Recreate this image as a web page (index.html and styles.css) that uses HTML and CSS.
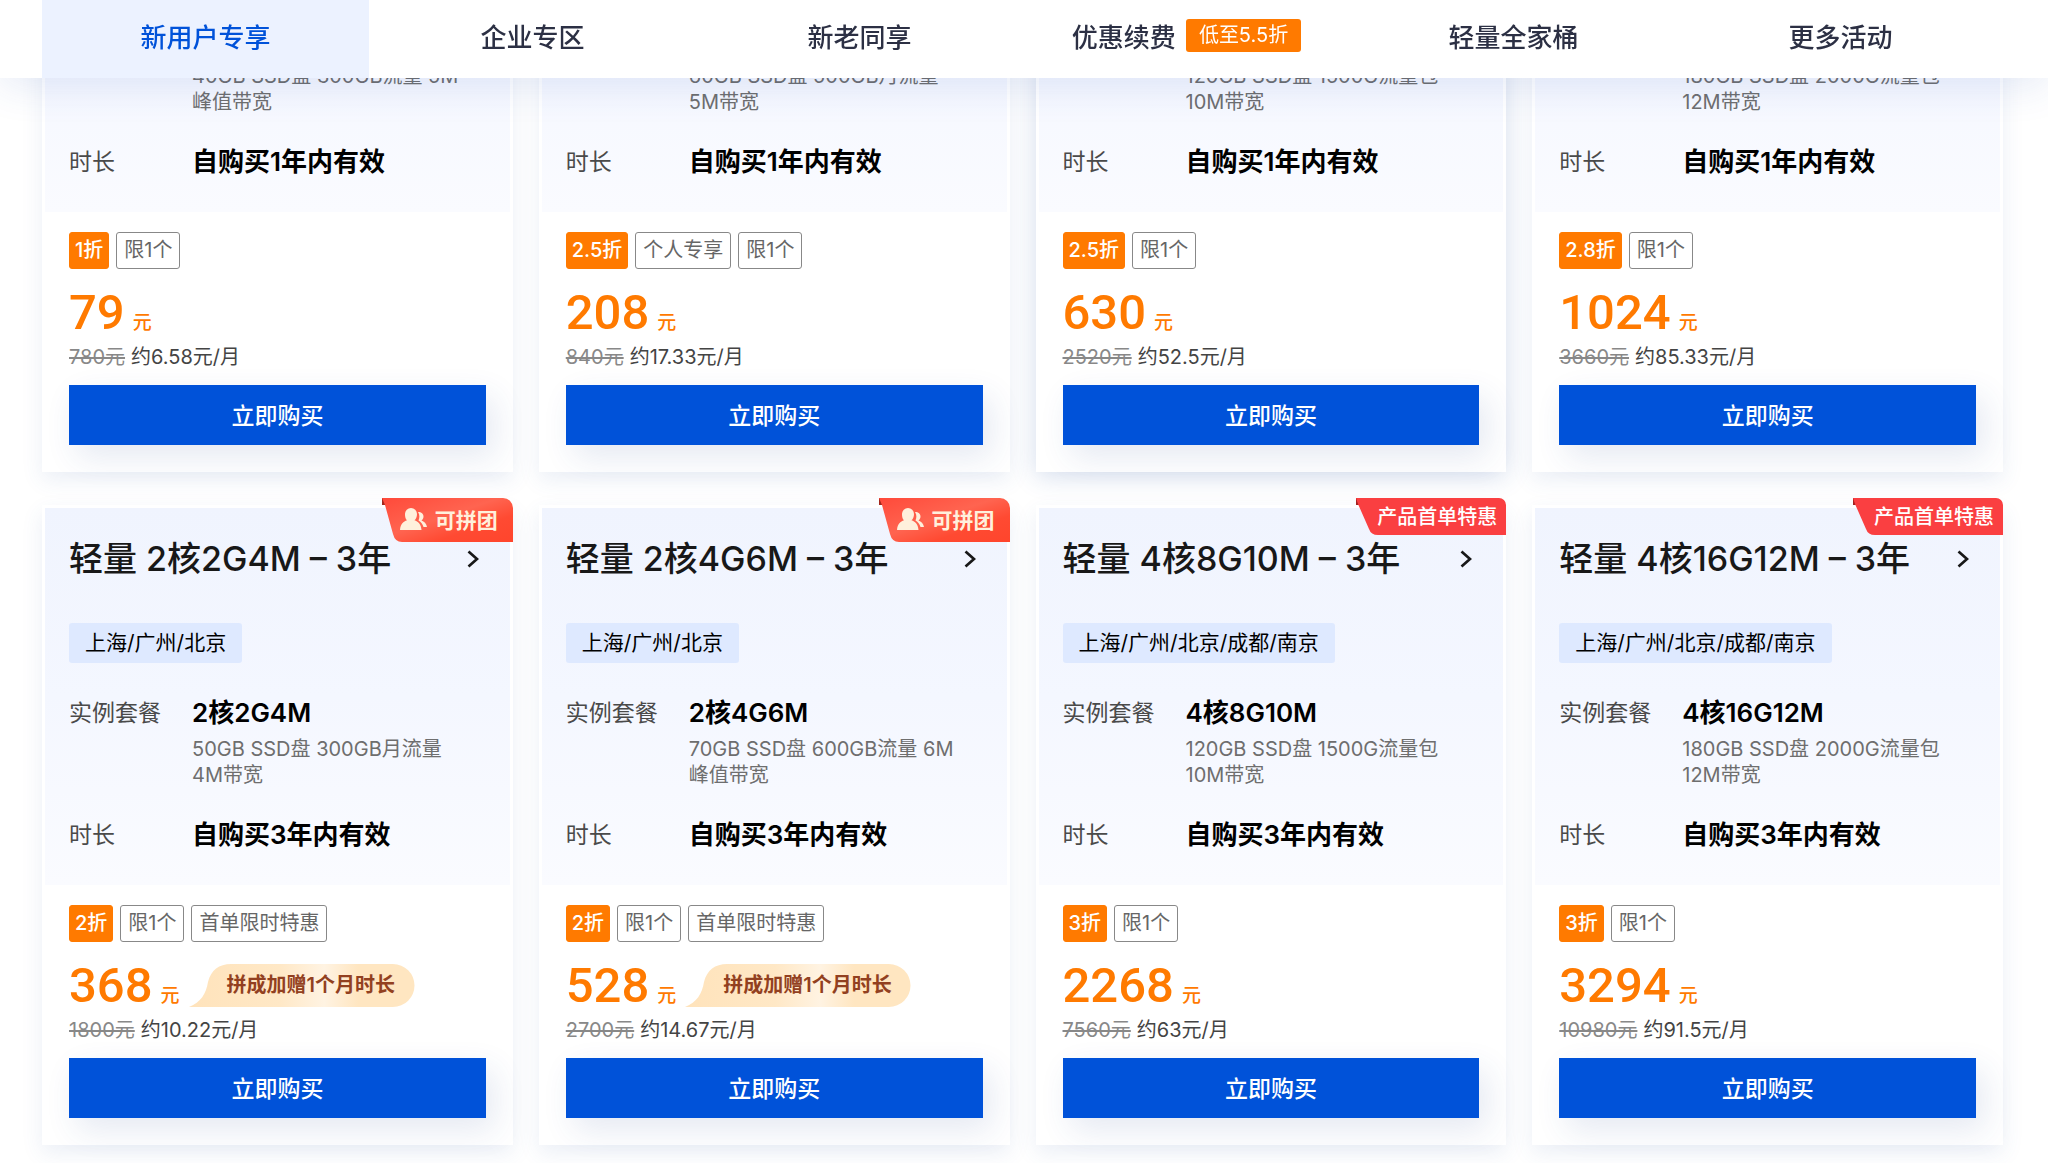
FILE: index.html
```
<!DOCTYPE html>
<html lang="zh-CN">
<head>
<meta charset="UTF-8">
<meta name="viewport" content="width=device-width, initial-scale=1.0">
<title>轻量应用服务器特惠</title>
<link rel="stylesheet" href="styles.css">
</head>
<body>

<!-- 图标 -->
<svg class="sprite" aria-hidden="true">
  <defs>
    <linearGradient id="group-fill" x1="0" y1="0" x2="1" y2="1">
      <stop offset="0" stop-color="#ff4a3a"/>
      <stop offset="0.45" stop-color="#ff6450"/>
      <stop offset="0.7" stop-color="#ff4a32"/>
      <stop offset="1" stop-color="#ff452c"/>
    </linearGradient>
    <linearGradient id="gift-fill">
      <stop offset="0" stop-color="#ffe3bb"/>
      <stop offset="0.4" stop-color="#ffe8c6"/>
      <stop offset="0.6" stop-color="#fff3e2"/>
      <stop offset="0.75" stop-color="#ffe6c1"/>
      <stop offset="1" stop-color="#ffe6c1"/>
    </linearGradient>
  </defs>
  <symbol id="group-bg" viewBox="0 0 131 44">
    <path d="M0 0h3v7H0z" fill="#a3271b"/>
    <path d="M0 0h121a10 10 0 0 1 10 10v34H20q-7 0-9-8L3 7z" fill="url(#group-fill)"/>
  </symbol>
  <symbol id="first-bg" viewBox="0 0 150 37">
    <path d="M0 0h3v7H0z" fill="#a3201f"/>
    <path d="M0 0h143a7 7 0 0 1 7 7v30H22q-7 0-9-6L2 6z" fill="#fa3f41"/>
  </symbol>
  <symbol id="people" viewBox="0 0 28 22">
    <path d="M11 0a6 6 0 0 1 6 6c0 3-1 5-2.500 6.300 3.500 1.200 6.500 3.700 7 9.700H0c.5-6 3.500-8.500 7-9.700C5.500 11 5 9 5 6a6 6 0 0 1 6-6z"/>
    <path d="M18 4c3.500 0 5.500 2 5.500 4.500 0 1.800-.8 3-2 4 2.500 1 5 3 5.500 6.500h-3.500c-.8-3-2.500-5-5-6.500C19.500 10 20 7 18 4z"/>
  </symbol>
  <symbol id="arrow" viewBox="0 0 12 18">
    <path d="M1.500 1.500 10 9l-8.500 7.500" fill="none" stroke="#181818" stroke-width="2.700"/>
  </symbol>
  <symbol id="gift-bg" viewBox="0 0 226 43">
    <path d="M0 43C12 38 17 30 19 18 22 6 30 0 42 0h162a21.500 21.500 0 0 1 0 43z" fill="url(#gift-fill)"/>
  </symbol>
</svg>

<!-- 顶部导航 -->
<nav class="tabs">
  <a class="tab active" href="#new">新用户专享</a>
  <a class="tab" href="#company">企业专区</a>
  <a class="tab" href="#all">新老同享</a>
  <a class="tab" href="#renew">优惠续费<span class="tab-tag">低至5.5折</span></a>
  <a class="tab" href="#family">轻量全家桶</a>
  <a class="tab" href="#more">更多活动</a>
</nav>

<main class="cards" id="new">

  <!-- 1年套餐 -->
  <article class="card under-tabs">
    <dl class="spec">
      <dd class="desc">40GB SSD盘 300GB流量 5M<br>峰值带宽</dd>
      <dt>时长</dt>
      <dd class="value">自购买1年内有效</dd>
    </dl>
    <div class="buy">
      <div class="tags"><span class="tag off">1折</span><span class="tag">限1个</span></div>
      <div class="price"><strong>79</strong><span class="unit">元</span></div>
      <p class="month"><del>780元</del>约6.58元/月</p>
      <button class="buy-btn" type="button">立即购买</button>
    </div>
  </article>

  <article class="card under-tabs">
    <dl class="spec">
      <dd class="desc">60GB SSD盘 500GB月流量<br>5M带宽</dd>
      <dt>时长</dt>
      <dd class="value">自购买1年内有效</dd>
    </dl>
    <div class="buy">
      <div class="tags"><span class="tag off">2.5折</span><span class="tag">个人专享</span><span class="tag">限1个</span></div>
      <div class="price"><strong>208</strong><span class="unit">元</span></div>
      <p class="month"><del>840元</del>约17.33元/月</p>
      <button class="buy-btn" type="button">立即购买</button>
    </div>
  </article>

  <article class="card under-tabs raised">
    <dl class="spec">
      <dd class="desc">120GB SSD盘 1500G流量包<br>10M带宽</dd>
      <dt>时长</dt>
      <dd class="value">自购买1年内有效</dd>
    </dl>
    <div class="buy">
      <div class="tags"><span class="tag off">2.5折</span><span class="tag">限1个</span></div>
      <div class="price"><strong>630</strong><span class="unit">元</span></div>
      <p class="month"><del>2520元</del>约52.5元/月</p>
      <button class="buy-btn" type="button">立即购买</button>
    </div>
  </article>

  <article class="card under-tabs">
    <dl class="spec">
      <dd class="desc">180GB SSD盘 2000G流量包<br>12M带宽</dd>
      <dt>时长</dt>
      <dd class="value">自购买1年内有效</dd>
    </dl>
    <div class="buy">
      <div class="tags"><span class="tag off">2.8折</span><span class="tag">限1个</span></div>
      <div class="price"><strong>1024</strong><span class="unit">元</span></div>
      <p class="month"><del>3660元</del>约85.33元/月</p>
      <button class="buy-btn" type="button">立即购买</button>
    </div>
  </article>

  <!-- 3年套餐 -->
  <article class="card">
    <div class="badge group"><svg class="badge-bg"><use href="#group-bg"/></svg><svg class="people"><use href="#people"/></svg><span>可拼团</span></div>
    <div class="info">
      <h2><a href="#buy-2c2g">轻量 2核2G4M – 3年<svg class="arrow"><use href="#arrow"/></svg></a></h2>
      <span class="region">上海/广州/北京</span>
      <dl class="spec">
        <dt>实例套餐</dt>
        <dd class="value">2核2G4M</dd>
        <dd class="desc">50GB SSD盘 300GB月流量<br>4M带宽</dd>
        <dt>时长</dt>
        <dd class="value">自购买3年内有效</dd>
      </dl>
    </div>
    <div class="buy">
      <div class="tags"><span class="tag off">2折</span><span class="tag">限1个</span><span class="tag">首单限时特惠</span></div>
      <div class="price"><strong>368</strong><span class="unit">元</span><span class="gift"><svg class="gift-bg"><use href="#gift-bg"/></svg><b>拼成加赠1个月时长</b></span></div>
      <p class="month"><del>1800元</del>约10.22元/月</p>
      <button class="buy-btn" type="button">立即购买</button>
    </div>
  </article>

  <article class="card">
    <div class="badge group"><svg class="badge-bg"><use href="#group-bg"/></svg><svg class="people"><use href="#people"/></svg><span>可拼团</span></div>
    <div class="info">
      <h2><a href="#buy-2c4g">轻量 2核4G6M – 3年<svg class="arrow"><use href="#arrow"/></svg></a></h2>
      <span class="region">上海/广州/北京</span>
      <dl class="spec">
        <dt>实例套餐</dt>
        <dd class="value">2核4G6M</dd>
        <dd class="desc">70GB SSD盘 600GB流量 6M<br>峰值带宽</dd>
        <dt>时长</dt>
        <dd class="value">自购买3年内有效</dd>
      </dl>
    </div>
    <div class="buy">
      <div class="tags"><span class="tag off">2折</span><span class="tag">限1个</span><span class="tag">首单限时特惠</span></div>
      <div class="price"><strong>528</strong><span class="unit">元</span><span class="gift"><svg class="gift-bg"><use href="#gift-bg"/></svg><b>拼成加赠1个月时长</b></span></div>
      <p class="month"><del>2700元</del>约14.67元/月</p>
      <button class="buy-btn" type="button">立即购买</button>
    </div>
  </article>

  <article class="card">
    <div class="badge first"><svg class="badge-bg"><use href="#first-bg"/></svg><span>产品首单特惠</span></div>
    <div class="info">
      <h2><a href="#buy-4c8g">轻量 4核8G10M – 3年<svg class="arrow"><use href="#arrow"/></svg></a></h2>
      <span class="region">上海/广州/北京/成都/南京</span>
      <dl class="spec">
        <dt>实例套餐</dt>
        <dd class="value">4核8G10M</dd>
        <dd class="desc">120GB SSD盘 1500G流量包<br>10M带宽</dd>
        <dt>时长</dt>
        <dd class="value">自购买3年内有效</dd>
      </dl>
    </div>
    <div class="buy">
      <div class="tags"><span class="tag off">3折</span><span class="tag">限1个</span></div>
      <div class="price"><strong>2268</strong><span class="unit">元</span></div>
      <p class="month"><del>7560元</del>约63元/月</p>
      <button class="buy-btn" type="button">立即购买</button>
    </div>
  </article>

  <article class="card">
    <div class="badge first"><svg class="badge-bg"><use href="#first-bg"/></svg><span>产品首单特惠</span></div>
    <div class="info">
      <h2><a href="#buy-4c16g">轻量 4核16G12M – 3年<svg class="arrow"><use href="#arrow"/></svg></a></h2>
      <span class="region">上海/广州/北京/成都/南京</span>
      <dl class="spec">
        <dt>实例套餐</dt>
        <dd class="value">4核16G12M</dd>
        <dd class="desc">180GB SSD盘 2000G流量包<br>12M带宽</dd>
        <dt>时长</dt>
        <dd class="value">自购买3年内有效</dd>
      </dl>
    </div>
    <div class="buy">
      <div class="tags"><span class="tag off">3折</span><span class="tag">限1个</span></div>
      <div class="price"><strong>3294</strong><span class="unit">元</span></div>
      <p class="month"><del>10980元</del>约91.5元/月</p>
      <button class="buy-btn" type="button">立即购买</button>
    </div>
  </article>

</main>

</body>
</html>
```
FILE: styles.css
```
* {
  box-sizing: border-box;
}
body {
  margin: 0;
  background: #fff;
  color: #181818;
  font-family: Inter, "Noto Sans CJK SC", sans-serif;
  font-size: 20px;
}
a {
  color: inherit;
  text-decoration: none;
}
.sprite {
  position: absolute;
  width: 0;
  height: 0;
}

/* 顶部导航 */
.tabs {
  position: fixed;
  top: 0;
  left: 0;
  right: 0;
  z-index: 10;
  display: flex;
  height: 78px;
  padding: 0 44px 0 42px;
  background: #fff;
  box-shadow: 0 8px 40px rgba(40, 80, 180, 0.12);
}
.tab {
  flex: 1;
  display: flex;
  align-items: center;
  justify-content: center;
  gap: 10px;
  padding-bottom: 8px;
  color: #2c3044;
  font-size: 26px;
  font-weight: 500;
}
.tab.active {
  background: #ecf2ff;
  color: #0052d9;
}
.tab-tag {
  padding: 0 13px;
  border-radius: 3px;
  background: #ff7a00;
  color: #fff;
  font-size: 20px;
  font-weight: 400;
  line-height: 33px;
}

/* 套餐卡片 */
.cards {
  display: grid;
  grid-template-columns: repeat(4, 1fr);
  gap: 33px 26px;
  padding: 0 45px 18px 42px;
}
.card {
  position: relative;
  border: 3px solid #fff;
  background: #fff;
  box-shadow: 0 8px 20px rgba(55, 99, 170, 0.1);
}
.card.raised {
  box-shadow: 0 4px 24px rgba(36, 80, 160, 0.2);
}
.info {
  padding: 29px 24px 33px;
  background: linear-gradient(#f0f4fe, #f4f7ff 50%, #fafbff);
}
.under-tabs {
  border-top: 0;
}
.under-tabs > .spec {
  padding: 57px 24px 33px;
  background: linear-gradient(#f3f6ff, #fafbff);
}
h2 {
  margin: 0 0 42px;
  font-size: 34px;
  font-weight: 500;
  line-height: 44px;
}
h2 a {
  display: flex;
  align-items: center;
  justify-content: space-between;
}
.arrow {
  width: 12px;
  height: 18px;
  margin-right: 7px;
}
.region {
  display: inline-block;
  padding: 0 16px;
  border-radius: 3px;
  background: #dee9ff;
  color: #000;
  font-size: 21px;
  line-height: 40px;
  vertical-align: top;
}
.spec {
  display: grid;
  grid-template-columns: 123px 1fr;
  margin: 0;
}
.info .spec {
  margin-top: 33px;
}
.spec dt {
  color: #4a4a4a;
  font-size: 23px;
  line-height: 34px;
}
.spec dd {
  grid-column: 2;
  margin: 0;
}
.spec .value {
  color: #000;
  font-size: 26px;
  font-weight: 600;
  line-height: 34px;
}
.spec .desc {
  margin: 6px 0 30px;
  color: #6e6e6e;
  line-height: 26px;
}

/* 价格与购买 */
.buy {
  padding: 20px 24px 24px;
}
.tags {
  display: flex;
  gap: 7px;
}
.tag {
  padding: 0 7px;
  border: 1px solid #888;
  border-radius: 3px;
  color: #666;
  line-height: 35px;
}
.tag.off {
  padding: 0 5px;
  border-color: #ff7a00;
  background: #ff7a00;
  color: #fff;
  font-weight: 500;
}
.price {
  display: flex;
  align-items: baseline;
  height: 43px;
  margin-top: 22px;
  color: #ff7a00;
  line-height: 43px;
}
.price strong {
  font-family: Roboto, sans-serif;
  font-size: 49px;
  font-weight: 500;
}
.unit {
  margin-left: 8px;
  font-size: 19px;
  font-weight: 500;
}
.gift {
  position: relative;
  align-self: flex-start;
  width: 226px;
  height: 43px;
  margin-left: 9px;
  padding-left: 38px;
  color: #924020;
}
.gift-bg {
  position: absolute;
  top: 0;
  left: 0;
  width: 226px;
  height: 43px;
}
.gift b {
  position: relative;
  font-weight: 600;
  white-space: nowrap;
}
.month {
  margin: 9px 0 14px;
  color: #444;
  line-height: 28px;
}
.month del {
  margin-right: 6px;
  color: #888;
}
.buy-btn {
  display: block;
  width: 100%;
  height: 60px;
  padding: 0 0 3px;
  border: 0;
  background: #0052d9;
  box-shadow: 8px 12px 32px rgba(40, 70, 150, 0.12);
  color: #fff;
  font: inherit;
  font-size: 23px;
  font-weight: 500;
  cursor: pointer;
}

/* 右上角标 */
.badge {
  position: absolute;
  top: -10px;
  right: -3px;
  display: flex;
  align-items: center;
  padding-bottom: 2px;
}
.badge-bg {
  position: absolute;
  inset: 0;
  width: 100%;
  height: 100%;
}
.badge span {
  position: relative;
}
.group {
  width: 131px;
  height: 44px;
  gap: 7px;
  padding-left: 18px;
  color: #fff0dc;
  font-size: 21px;
  font-weight: 700;
}
.people {
  position: relative;
  width: 28px;
  height: 22px;
  fill: #fff0dc;
}
.first {
  width: 150px;
  height: 37px;
  padding-left: 21px;
  color: #fff;
  font-weight: 500;
}
```
